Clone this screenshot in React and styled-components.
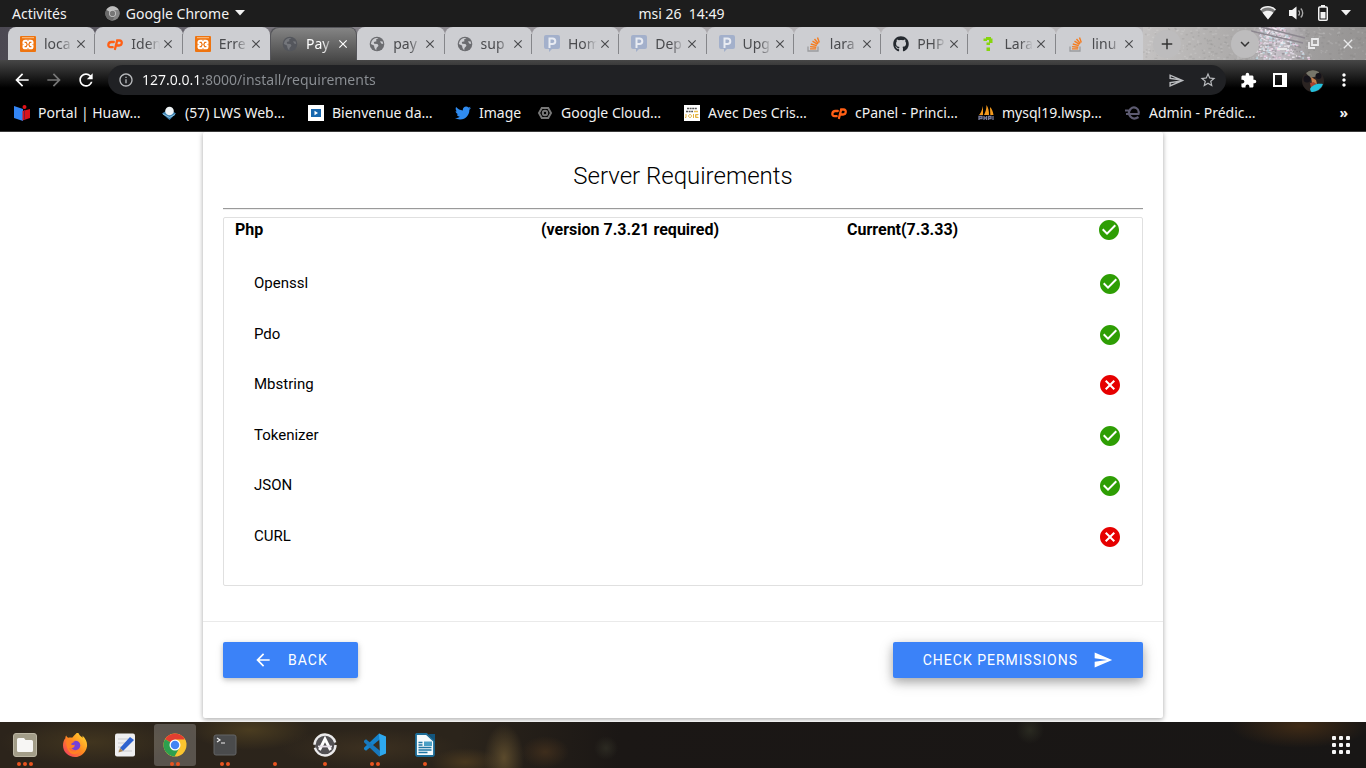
import React from "react";
import styled, { createGlobalStyle, css } from "styled-components";
import {
  MdCheckCircle, MdCancel, MdSend, MdOutlineSend, MdArrowBack, MdArrowForward, MdRefresh,
  MdInfoOutline, MdStarBorder, MdExtension, MdMoreVert, MdAdd, MdClose, MdKeyboardArrowDown,
} from "react-icons/md";
import { FaGithub, FaTwitter } from "react-icons/fa";

const GlobalStyle = createGlobalStyle`
  * { box-sizing: border-box; }
  body { margin: 0; background: #fff; font-family: "Noto Sans", "Open Sans", sans-serif; font-size: 14px; }
  button { font: inherit; color: inherit; border: 0; padding: 0; background: none; cursor: pointer; }
  a { color: inherit; text-decoration: none; }
  svg { display: block; flex: none; }
`;

const Desktop = styled.div`
  min-height: 100vh;
  display: flex;
  flex-direction: column;
`;

/* ---------- system bar ---------- */
const SystemBar = styled.header`
  display: grid;
  grid-template-columns: 1fr auto 1fr;
  align-items: center;
  height: 27px;
  padding: 0 15px 1px 12px;
  background: #1d1d1d;
  color: #f2f2f2;
`;
const BarGroup = styled.div`
  display: flex;
  align-items: center;
  gap: ${(p) => p.$gap}px;
  justify-content: ${(p) => (p.$end ? "flex-end" : "flex-start")};
`;
const AppMenu = styled.button`
  display: flex;
  align-items: center;
  gap: 6px;
`;
const Clock = styled.time`
  white-space: pre;
`;

/* ---------- browser ---------- */
const TabBar = styled.nav`
  display: flex;
  height: 33px;
  padding-left: 8px;
  background: linear-gradient(90deg, #4b4852 0, #8d8a90 30%, #b5b3b6 60%, #bdbbbd 100%);
`;
const Tab = styled.div`
  flex: 1 1 0;
  min-width: 0;
  display: flex;
  align-items: center;
  padding-left: 12px;
  position: relative;
  border-radius: 8px 8px 0 0;
  background: #cdced2;
  color: #4a4b4e;
  ${(p) => p.$divider && css`
    &::after {
      content: "";
      position: absolute;
      right: 0;
      top: 7px;
      height: 20px;
      width: 1px;
      background: #85868a;
    }
  `}
  ${(p) => p.$active && css`
    background: linear-gradient(#868686, #484848);
    color: #fff;
    box-shadow: inset 1px 1px 0 #55555a, inset -1px 0 0 #55555a;
  `}
`;
const TabTitle = styled.a`
  display: flex;
  align-items: center;
  gap: 8px;
  width: 60px;
  font-size: 14px;
  line-height: 24px;
  white-space: nowrap;
  mask-image: linear-gradient(90deg, #000 40px, transparent 53px);
`;
const CloseButton = styled.button`
  margin-left: -6px;
  width: 14px;
  height: 14px;
`;
const TabTail = styled.div`
  position: relative;
  overflow: hidden;
  flex: 0 0 223px;
  display: flex;
  align-items: center;
  padding: 0 10px;
  background: #aaa8a8;
`;
const Wallpaper = styled.svg`
  position: absolute;
  inset: 0;
  width: 100%;
  height: 100%;
`;
const RoundButton = styled.button`
  position: relative;
  display: grid;
  place-items: center;
  width: 28px;
  height: 28px;
  border-radius: 50%;
  background: #bdbcbd;
  color: #333;
`;
const WindowControls = styled.div`
  position: relative;
  display: flex;
  align-items: center;
  gap: 21px;
  color: #e9e9ea;
  margin-left: 18px;
`;
const Spacer = styled.div`
  flex: 1;
`;
const Toolbar = styled.div`
  display: flex;
  align-items: center;
  gap: 12px;
  height: 35px;
  padding: 5px 12px 0;
  background: linear-gradient(#474747, #000 28px);
  color: #fff;
`;
const IconButton = styled.button`
  display: grid;
  place-items: center;
  width: 20px;
  height: 20px;
  color: ${(p) => p.$color || "inherit"};
`;
const Omnibox = styled.label`
  flex: 1;
  display: flex;
  align-items: center;
  gap: 8px;
  height: 30px;
  padding: 0 8px 0 10px;
  border-radius: 15px;
  background: #202124;
  color: #b9bbbe;
`;
const OmniboxActions = styled.span`
  display: flex;
  gap: 12px;
`;
const Address = styled.input`
  flex: 1;
  border: 0;
  outline: 0;
  padding: 0;
  font: inherit;
  line-height: 24px;
  color: transparent;
  background: linear-gradient(90deg, #fff 60px, #8b8f94 60px);
  background-clip: text;
`;
const BookmarkBar = styled.nav`
  display: flex;
  align-items: center;
  gap: 16px;
  height: 37px;
  padding: 0 18px 1px 14px;
  background: #000;
  color: #f1f1f1;
  border-bottom: 1px solid #3a3a3a;
`;
const Bookmark = styled.a`
  display: flex;
  align-items: center;
  gap: 8px;
  white-space: nowrap;
`;
const BookmarkText = styled.span`
  width: ${(p) => (p.$short ? 42 : 107)}px;
`;
const MoreBookmarks = styled.button`
  font-weight: 700;
`;

/* ---------- web page ---------- */
const Page = styled.main`
  flex: 1;
  padding-bottom: 4px;
  overflow: hidden;
  background: #fff;
  color: #000;
  font-family: Roboto, "Liberation Sans", sans-serif;
`;
const Card = styled.section`
  max-width: 960px;
  margin: 0 auto;
  padding-top: 26px;
  border-radius: 2px;
  box-shadow: 0 2px 4px rgba(0, 0, 0, 0.2), 0 0 6px rgba(0, 0, 0, 0.16);
`;
const CardBody = styled.div`
  padding: 0 20px 35px;
`;
const Title = styled.h1`
  margin: 0 0 14px;
  font-size: 24px;
  font-weight: 300;
  line-height: 36px;
  text-align: center;
`;
const Rule = styled.hr`
  margin: 0 0 7px;
  border: 0;
  border-top: 1px solid #9a9a9a;
  border-bottom: 1px solid #eee;
`;
const TableFrame = styled.div`
  padding-bottom: 24px;
  border: 1px solid #e0e0e0;
  border-radius: 2px;
`;
const Table = styled.table`
  width: 100%;
  table-layout: fixed;
  border-collapse: collapse;
  text-align: left;
`;
const HeadCell = styled.th`
  padding: 0 11px 16px;
  font-size: 16px;
  line-height: 24px;
  font-weight: 700;
`;
const Cell = styled.td`
  padding: 14px 20px 14px 30px;
  font-size: 15px;
  line-height: 1.5;
`;
const Split = styled.div`
  display: flex;
  justify-content: space-between;
  padding-right: 10px;
`;
const Status = styled.span`
  display: flex;
  justify-content: flex-end;
  height: 22px;
  color: ${(p) => (p.$ok ? "#2e9e04" : "#e60000")};
`;
const CardFooter = styled.footer`
  display: flex;
  justify-content: space-between;
  padding: 20px 20px 40px;
  border-top: 1px solid #eaeaea;
`;
const ActionButton = styled.button`
  display: flex;
  align-items: center;
  gap: 15px;
  height: 36px;
  padding: 0 30px;
  border-radius: 2px;
  background: #3b82f8;
  color: #fff;
  font-size: 14px;
  letter-spacing: 1px;
  box-shadow: ${(p) => (p.$raised
    ? "0 4px 10px rgba(0,0,0,.24), 0 4px 16px rgba(0,0,0,.16)"
    : "0 2px 5px rgba(0,0,0,.18), 0 2px 8px rgba(0,0,0,.1)")};
`;

/* ---------- dock ---------- */
const Dock = styled.nav`
  display: flex;
  align-items: center;
  gap: 8px;
  height: 46px;
  padding: 0 16px 0 4px;
  background:
    radial-gradient(ellipse 20px 34px at 504px 36px, #5b4a2c, transparent),
    radial-gradient(ellipse 34px 14px at 465px 40px, #49381f, transparent),
    radial-gradient(ellipse 24px 16px at 545px 30px, #3e2d1c, transparent),
    radial-gradient(ellipse 12px 12px at 606px 26px, #2c2a22, transparent),
    radial-gradient(ellipse 14px 14px at 1030px 8px, #2a2a21, transparent),
    radial-gradient(ellipse 70px 22px at 1300px 4px, #402b16, transparent),
    radial-gradient(ellipse 60px 20px at 250px 8px, #4a3c20, transparent),
    radial-gradient(ellipse 90px 20px at 370px 26px, #3c3020, transparent),
    radial-gradient(ellipse 90px 24px at 90px 20px, #41351f, transparent),
    linear-gradient(90deg, #2c241b 0, #2b241b 460px, #1b1715 620px, #181615 100%);
`;
const DockItem = styled.button`
  display: flex;
  flex-direction: column;
  align-items: center;
  width: 42px;
  height: 42px;
  padding-top: 9px;
  gap: 5px;
  border-radius: 3px;
  background: ${(p) => (p.$active ? "rgba(255,255,255,.22)" : "none")};
`;
const Dots = styled.span`
  display: flex;
  gap: 2px;
  height: 4px;
`;
const Dot = styled.i`
  width: 4px;
  height: 4px;
  border-radius: 50%;
  background: #e95420;
`;
const AppGrid = styled.button`
  display: grid;
  grid-template-columns: repeat(3, 4px);
  gap: 3px;
`;
const GridDot = styled.i`
  height: 4px;
  border-radius: 1px;
  background: #f5f5f5;
`;

/* ---------- icons ---------- */
const XamppIcon = () => (
  <svg width="16" height="16" viewBox="0 0 16 16">
    <rect width="16" height="16" rx="1" fill="#ee7410" />
    <path d="M2 1.700h12" stroke="#fbc38b" strokeWidth="1" />
    <rect x="2.500" y="3.700" width="11" height="9.600" rx="2.600" fill="#fff" />
    <path d="M7.200 3.700h1.600L8 5.200ZM7.200 13.300h1.600L8 11.800ZM2.500 7.600v1.800l1.200-.9ZM13.500 7.600v1.800l-1.200-.9Z" fill="#ee7410" />
    <path d="M4.600 6.300h1.600l1 2.200-1 2.200H4.600M11.400 6.300H9.800l-1 2.200 1 2.200h1.600" stroke="#ee7410" strokeWidth="1.200" fill="none" />
  </svg>
);
const GlobeIcon = ({ dark }) => (
  <svg width="16" height="16" viewBox="0 0 16 16">
    <circle cx="8" cy="8" r="7.300" fill={dark ? "#54565c" : "#6b6c70"} />
    <path d="M9.500 2.200 7 3.600l.5 1.600-2.700.9.400 1.700 3.300.3 1 1.700-2 2.300-.3 2.300L5.500 12 5 9.500 1.800 8A6.200 6.200 0 0 1 9.500 2.200ZM11 5.200l2.600.3.600 2.400-2-.3Z" fill={dark ? "#74767b" : "#cdced2"} />
  </svg>
);
const CpIcon = () => (
  <svg width="16" height="16" viewBox="0 0 16 16" fill="none" stroke="#ff5f15" strokeWidth="2.300" strokeLinecap="round">
    <path d="M6.800 6H4.300c-3.600 0-4 5.200-.8 5.200h2.200" />
    <path d="M8 13l2.200-8.500h2.300c3.300 0 2.800 5-.4 5h-1.500" />
  </svg>
);
const PIcon = () => (
  <svg width="16" height="17" viewBox="0 0 16 17">
    <path d="M2 0h12a2 2 0 0 1 2 2v10a2 2 0 0 1-2 2H8l-3 3v-3H2a2 2 0 0 1-2-2V2a2 2 0 0 1 2-2Z" fill="#a3b0cb" />
    <path d="M5.500 13V3.500h3a2.700 2.700 0 0 1 0 5.600h-3" fill="none" stroke="#e8ebf2" strokeWidth="2" />
  </svg>
);
const StackIcon = () => (
  <svg width="16" height="16" viewBox="0 0 16 16" fill="none">
    <path d="M2 10.500V15h10v-4.500" stroke="#9b9c9f" strokeWidth="1.300" />
    <path d="M4 12.900h6.200M4.100 10.600l6.200.6M4.800 8l6 1.700M6.500 5.200l5 3.200M8.500 3l3.800 4.500M11.500 1.500l1.800 5" stroke="#f57c1f" strokeWidth="1.400" />
  </svg>
);
const QuestionIcon = () => (
  <svg width="16" height="16" viewBox="0 0 16 16">
    <path d="M3.500 5V2.500H6V1h5v1.500h1.500V7H10v2H6.500V6.500H9V4H7v1ZM6.500 11.500H10V15H6.500Z" fill="#86d50d" />
  </svg>
);
const HuaweiIcon = () => (
  <svg width="16" height="16" viewBox="0 0 16 16">
    <path d="M0 1l9 3v12l-9-3Z" fill="#3385f5" />
    <circle cx="10.500" cy="2" r="2" fill="#e2121b" />
    <path d="M8.500 6 16 4v9l-7.500 2.500Z" fill="#d8131c" />
    <path d="M10.500 5v10" stroke="#7c1a3c" />
  </svg>
);
const MailIcon = () => (
  <svg width="16" height="16" viewBox="0 0 16 16">
    <path d="M1 8.500 8 4l7 4.500L8.500 15Z" fill="#3b7fae" />
    <circle cx="8.500" cy="6" r="4.300" fill="#eef3f6" />
    <path d="m2 9 6.500 3.500L14 9.500" stroke="#8cc3e2" fill="none" />
  </svg>
);
const PlayIcon = () => (
  <svg width="16" height="16" viewBox="0 0 16 16">
    <path d="M0 0h16v16H0Z" fill="#fff" />
    <path d="M3 4h10v8H3Z" fill="#1767ae" />
    <path d="M6.500 5.800v4.400L10 8Z" fill="#fff" />
  </svg>
);
const CloudIcon = () => (
  <svg width="16" height="16" viewBox="0 0 16 16" fill="none" stroke="#777" strokeWidth="2">
    <path d="M4.800 3h6.400L14 8l-2.800 5H4.800L2 8Z" />
    <circle cx="8" cy="8" r="2.200" />
  </svg>
);
const JoieIcon = () => (
  <svg width="16" height="16" viewBox="0 0 16 16" fill="none">
    <path d="M0 0h16v16H0Z" fill="#fff" />
    <path d="M3 3.500h10M2 6.500h7" stroke="#555" strokeWidth="1.500" strokeDasharray="2 .6" />
    <path d="M10 6.500h4" stroke="#e9bd4e" strokeWidth="1.500" />
    <path d="M2 9v3.500H1M6 9.500a1.500 1.500 0 1 0 .1 0M9.500 9v4M14.500 9.500h-3v3h3M11.500 11h2" stroke="#e4b23c" />
  </svg>
);
const MyAdminIcon = () => (
  <svg width="16" height="16" viewBox="0 0 16 16">
    <path d="M5 1v9H1C3 8 4 5 5 1ZM8.500 0c2 3 2.500 6 2.500 10H6C7.500 7 8.500 4 8.500 0ZM12 2c2 2 3 4.500 3.500 8H12.300Z" fill="#f39a1d" />
    <path d="M1 15v-3.500h3v2H1M6 15v-4M6 13h2.500M8.500 15v-4M10.500 15v-3.500h2.500v2h-2.500M15 15v-4" stroke="#767b9b" fill="none" strokeWidth="1.300" />
  </svg>
);
const AdminIcon = () => (
  <svg width="16" height="16" viewBox="0 0 16 16" fill="none" stroke="#5c5a70" strokeWidth="2.200">
    <path d="M0 5.500h4M1 9h12.500C15 3.500 9 .5 5.500 4 1.500 9 6.500 16.500 13.500 12" />
  </svg>
);
const ChromeIcon = ({ size, mono }) => (
  <svg width={size} height={size} viewBox="0 0 48 48">
    <circle cx="24" cy="24" r="23" fill={mono ? "#858585" : "#fbc52f"} />
    <path d="M24 24 4.100 12.500a23 23 0 0 1 39.800 0Z" fill={mono ? "#bdbdbd" : "#e23e30"} />
    <path d="M4.100 12.500A23 23 0 0 0 23 47l10-17.500-9-5.500Z" fill={mono ? "#6a6a6a" : "#2d9f4e"} />
    <path d="M24 13h19.900a23 23 0 0 1 2 16Z" fill={mono ? "#858585" : "#fbc52f"} />
    <circle cx="24" cy="24" r="11" fill={mono ? "#ccc" : "#fff"} />
    <circle cx="24" cy="24" r="8.500" fill={mono ? "#777" : "#4285f4"} />
  </svg>
);
const WifiIcon = () => (
  <svg width="16" height="14" viewBox="0 0 16 14" fill="#f2f2f2">
    <path d="M8 13.500.5 4C4-.2 12-.2 15.500 4Z" opacity=".45" />
    <path d="M8 13.500 2.600 6.700c2.700-2.500 8.100-2.500 10.800 0Z" />
    <path d="M.5 4C4-.2 12-.2 15.500 4" fill="none" stroke="#f2f2f2" strokeWidth="1.500" />
  </svg>
);
const VolumeIcon = () => (
  <svg width="16" height="14" viewBox="0 0 16 14">
    <path d="M0 4h3l4.500-3.500v13L3 10H0Z" fill="#f2f2f2" />
    <path d="M9.500 4.500c1.300 1.300 1.300 3.700 0 5M11.800 2.500c2.500 2.500 2.500 6.500 0 9" fill="none" stroke="#aaa" strokeWidth="1.400" />
  </svg>
);
const BatteryIcon = () => (
  <svg width="10" height="16" viewBox="0 0 10 16">
    <path d="M3 0h4v2H3Z" fill="#f2f2f2" />
    <rect x=".75" y="2" width="8.500" height="13.200" rx="1" fill="none" stroke="#f2f2f2" strokeWidth="1.500" />
    <path d="M2.500 7h5v6.500h-5Z" fill="#f2f2f2" />
  </svg>
);
const CaretIcon = () => (
  <svg width="10" height="6" viewBox="0 0 10 6"><path d="M0 0h10L5 5.500Z" fill="#f2f2f2" /></svg>
);
const MinimizeIcon = () => (
  <svg width="10" height="12" viewBox="0 0 10 12"><path d="M0 10h10v2H0Z" fill="currentColor" /></svg>
);
const RestoreIcon = () => (
  <svg width="11" height="11" viewBox="0 0 11 11" fill="none" stroke="currentColor" strokeWidth="1.800">
    <path d="M4 1h6v6H4Z" /><path d="M1 4v6h6" />
  </svg>
);
const PanelIcon = () => (
  <svg width="14" height="14" viewBox="0 0 14 14"><path d="M0 0h14v14H0ZM2 2v10h7V2Z" fill="#fff" fillRule="evenodd" /></svg>
);
const Avatar = () => (
  <svg width="22" height="22" viewBox="0 0 22 22">
    <circle cx="11" cy="11" r="11" fill="#2b2422" />
    <path d="M4 3a11 11 0 0 1 13-1l-1 4-8 2Z" fill="#77766a" />
    <circle cx="5" cy="9" r="3.500" fill="#15131a" />
    <circle cx="16.500" cy="6" r="3" fill="#15131a" />
    <path d="m9 7 5 3 1 4-5-1Z" fill="#c47c4b" />
    <path d="m8 13 4-1 2 3-5 3Z" fill="#a8402f" />
    <path d="M8 19c2-4 7-6 13-5a11 11 0 0 1-12 7.800Z" fill="#24c0dc" />
  </svg>
);
const FilesIcon = () => (
  <svg width="24" height="24" viewBox="0 0 24 24">
    <rect x=".5" y=".5" width="23" height="23" rx="2.500" fill="#a39d88" stroke="#bcb6a3" />
    <path d="M4 6.500A1.500 1.500 0 0 1 5.500 5H11l1.500 2h6A1.500 1.500 0 0 1 20 8.500v9a1.500 1.500 0 0 1-1.500 1.500h-13A1.500 1.500 0 0 1 4 17.500Z" fill="#f7f6f4" />
  </svg>
);
const FirefoxIcon = () => (
  <svg width="26" height="24" viewBox="0 1 26 25">
    <defs>
      <linearGradient id="fox" x1="1" y1="0" x2="0" y2="1">
        <stop offset="0" stopColor="#ffe436" /><stop offset=".5" stopColor="#ff8a1f" /><stop offset="1" stopColor="#f0306a" />
      </linearGradient>
    </defs>
    <path d="M16 0c1 2 2 4 5 6 0-1 0-1.500-.3-2.500C24.500 7 26 11 25.500 15 24 22 19 26 13 26 6 26 .5 20.500.5 14c0-3 1-6 2.500-7.500 0-1 0-2 .8-3 .5 1.200 1.200 2 2.200 2.500 1.500-.5 3-.5 4 0C12 3.500 14 1.500 16 0Z" fill="url(#fox)" />
    <circle cx="13.500" cy="14" r="5" fill="#7540d8" />
    <path d="M4 8c4 0 6 1 9 2-2 .5-3 1.500-4.500 2.500 1 1 2.500 1.500 4 .5 1 3-3 5-6 3.500C9 22 16 21 18.500 17c0 5-4 6.500-7.500 6S3 17 4 8Z" fill="#ff8124" />
  </svg>
);
const EditorIcon = () => (
  <svg width="24" height="24" viewBox="0 0 24 24">
    <rect x="2" y=".5" width="20" height="23" rx="2" fill="#efeff0" />
    <path d="M5 6h12M5 10h8M5 14h5M5 18h14" stroke="#cbcbce" />
    <path d="m17 4 4 3L10 18l-3-3Z" fill="#2f63cf" />
    <path d="m7 15 3 3-4.500 1.500Z" fill="#a8834e" />
  </svg>
);
const TerminalIcon = () => (
  <svg width="24" height="24" viewBox="0 0 24 24">
    <rect x="1" y="2" width="22" height="20" rx="2" fill="#4a4b4c" stroke="#636465" />
    <path d="m4 5 3 2-3 2M8 10h4" fill="none" stroke="#eee" strokeWidth="1.200" />
  </svg>
);
const SoftwareIcon = () => (
  <svg width="24" height="24" viewBox="0 0 24 24" fill="none">
    <circle cx="12" cy="12" r="10.500" fill="#535154" stroke="#ecebec" strokeWidth="2.400" strokeDasharray="30 3" />
    <path d="m6.500 17 5.500-11 5.500 11" stroke="#fff" strokeWidth="2.800" />
    <path d="M5 13.500h14" stroke="#e6dfe8" strokeWidth="1.800" />
  </svg>
);
const CodeIcon = () => (
  <svg width="24" height="24" viewBox="0 0 24 24">
    <path d="M17 1.500v4.800L3 17.800 1 16.200v-1.400L16 .6Z" fill="#1583cc" />
    <path d="M17 22.500v-4.800L3 6.200 1 7.800v1.400L16 23.400Z" fill="#1878bd" />
    <path d="m16 .6 7 3v16.800l-7 3L17 22Z" fill="#2ea8ee" />
  </svg>
);
const WriterIcon = () => (
  <svg width="24" height="24" viewBox="0 0 24 24">
    <path d="M3.500 1h10L21 8v13.500a1.500 1.500 0 0 1-1.500 1.500h-15A1.500 1.500 0 0 1 3 21.500V1.500Z" fill="#f4fafc" stroke="#1c6c97" strokeWidth="1.800" />
    <path d="M15.500 1H22v7Z" fill="#12567f" />
    <path d="M5.500 9.500h4M5.500 12h4M5.500 14.500h13M5.500 17h13M5.500 19.500h9" stroke="#1f76a3" strokeWidth="1.400" />
    <path d="M11 8.500h8v4.500h-8Z" fill="#4a9fc5" />
  </svg>
);
const Empty = () => <svg width="24" height="24" />;

/* Light shining through branches: seeded specks, densest near the window controls */
const SPECK_COLORS = ["#f7f4fb", "#e9e2ee", "#8f8a92", "#efc9e2", "#c3dfea", "#a5a0a6"];
const random = (n) => {
  const v = Math.sin(n * 91.7 + 13.1) * 43758.5453;
  return v - Math.floor(v);
};
const brightSpecks = Array.from({ length: 330 }, (_, i) => {
  const y = random(i * 3 + 1) * 33;
  const spread = 12 + y / 2;
  return {
    x: 128 + y / 3 + (random(i * 3) - 0.5) * 2 * spread,
    y,
    w: 1 + random(i * 3 + 2) * 2,
    fill: SPECK_COLORS[Math.floor(random(i * 7) * SPECK_COLORS.length)],
  };
});
const dimSpecks = Array.from({ length: 420 }, (_, i) => ({
  x: random(i * 5 + 900) * 223,
  y: random(i * 5 + 901) * 33,
  w: 1 + random(i * 5 + 902) * 2,
  fill: random(i * 5 + 903) > 0.5 ? "#fff" : "#666",
}));

const Branches = () => (
  <Wallpaper viewBox="0 0 223 33" preserveAspectRatio="none">
    <defs>
      <linearGradient id="bark">
        <stop offset="0" stopColor="#c4c2c2" /><stop offset=".3" stopColor="#b3b1b0" />
        <stop offset=".48" stopColor="#a9a7a7" /><stop offset=".6" stopColor="#c6c1c9" />
        <stop offset=".74" stopColor="#a09e9e" /><stop offset="1" stopColor="#959392" />
      </linearGradient>
    </defs>
    <path d="M0 0h223v33H0Z" fill="url(#bark)" />
    {dimSpecks.map((s, i) => <rect key={i} x={s.x} y={s.y} width={s.w} height="1.500" fill={s.fill} opacity=".13" />)}
    {brightSpecks.map((s, i) => <rect key={i} x={s.x} y={s.y} width={s.w} height="1.500" fill={s.fill} opacity=".75" />)}
    <path d="M108 4 160 16M118 0l44 11" stroke="#8c878f" strokeWidth="1.500" fill="none" />
  </Wallpaper>
);

const tabs = [
  ["loca", XamppIcon], ["Iden", CpIcon], ["Erre", XamppIcon],
  ["Pay", () => <GlobeIcon dark />], ["pay", GlobeIcon], ["sup", GlobeIcon],
  ["Hom", PIcon], ["Dep", PIcon], ["Upg", PIcon], ["lara", StackIcon],
  ["PHP", () => <FaGithub size={16} color="#24292f" />], ["Lara", QuestionIcon], ["linu", StackIcon],
];
const ACTIVE_TAB = 3;

const bookmarks = [
  ["Portal | Huaw…", HuaweiIcon], ["(57) LWS Web…", MailIcon], ["Bienvenue da…", PlayIcon],
  ["Image", () => <FaTwitter size={16} color="#2f8bf0" />], ["Google Cloud…", CloudIcon],
  ["Avec Des Cris…", JoieIcon], ["cPanel - Princi…", CpIcon], ["mysql19.lwsp…", MyAdminIcon],
  ["Admin - Prédic…", AdminIcon],
];

const extensions = [
  ["Openssl", true], ["Pdo", true], ["Mbstring", false],
  ["Tokenizer", true], ["JSON", true], ["CURL", false],
];

const dockApps = [
  ["Files", FilesIcon, 3], ["Firefox", FirefoxIcon, 0], ["Text Editor", EditorIcon, 0],
  ["Google Chrome", () => <ChromeIcon size={24} />, 2], ["Terminal", TerminalIcon, 2],
  ["Application", Empty, 1], ["Software Updater", SoftwareIcon, 1],
  ["Visual Studio Code", CodeIcon, 2], ["LibreOffice Writer", WriterIcon, 1],
];

const StatusIcon = ({ ok }) => (
  <Status $ok={ok} role="img" aria-label={ok ? "Enabled" : "Missing"}>
    {ok ? <MdCheckCircle size={24} /> : <MdCancel size={24} />}
  </Status>
);

export default function App() {
  return (
    <Desktop>
      <GlobalStyle />
      <SystemBar>
        <BarGroup $gap={38}>
          <button>Activités</button>
          <AppMenu><ChromeIcon size={15} mono />Google Chrome<CaretIcon /></AppMenu>
        </BarGroup>
        <Clock>{"msi 26  14:49"}</Clock>
        <BarGroup $gap={13} $end><WifiIcon /><VolumeIcon /><BatteryIcon /><CaretIcon /></BarGroup>
      </SystemBar>

      <TabBar aria-label="Tabs">
        {tabs.map(([title, Icon], i) => (
          <Tab key={i} $active={i === ACTIVE_TAB} $divider={i !== 2 && i !== 3 && i !== 12}>
            <TabTitle href="#"><Icon />{title}</TabTitle>
            <CloseButton aria-label="Close tab"><MdClose size={14} /></CloseButton>
          </Tab>
        ))}
        <TabTail>
          <Branches />
          <RoundButton aria-label="New tab"><MdAdd size={18} /></RoundButton>
          <Spacer />
          <RoundButton aria-label="Search tabs"><MdKeyboardArrowDown size={18} /></RoundButton>
          <WindowControls>
            <button aria-label="Minimize"><MinimizeIcon /></button>
            <button aria-label="Restore"><RestoreIcon /></button>
            <button aria-label="Close"><MdClose size={16} /></button>
          </WindowControls>
        </TabTail>
      </TabBar>

      <Toolbar>
        <IconButton aria-label="Back"><MdArrowBack size={20} /></IconButton>
        <IconButton aria-label="Forward" $color="#777"><MdArrowForward size={20} /></IconButton>
        <IconButton aria-label="Reload"><MdRefresh size={20} /></IconButton>
        <Omnibox>
          <MdInfoOutline size={16} />
          <Address aria-label="Address" defaultValue="127.0.0.1:8000/install/requirements" />
          <OmniboxActions>
            <IconButton aria-label="Share"><MdOutlineSend size={17} /></IconButton>
            <IconButton aria-label="Bookmark"><MdStarBorder size={18} /></IconButton>
          </OmniboxActions>
        </Omnibox>
        <IconButton aria-label="Extensions"><MdExtension size={17} /></IconButton>
        <IconButton aria-label="Side panel"><PanelIcon /></IconButton>
        <IconButton aria-label="Profile"><Avatar /></IconButton>
        <IconButton aria-label="Menu"><MdMoreVert size={20} /></IconButton>
      </Toolbar>

      <BookmarkBar aria-label="Bookmarks">
        {bookmarks.map(([label, Icon]) => (
          <Bookmark key={label} href="#">
            <Icon /><BookmarkText $short={label === "Image"}>{label}</BookmarkText>
          </Bookmark>
        ))}
        <Spacer />
        <MoreBookmarks aria-label="More bookmarks">»</MoreBookmarks>
      </BookmarkBar>

      <Page>
        <Card>
          <CardBody>
            <Title>Server Requirements</Title>
            <Rule />
            <TableFrame>
              <Table>
                <thead>
                  <tr>
                    <HeadCell>Php</HeadCell>
                    <HeadCell>(version 7.3.21 required)</HeadCell>
                    <HeadCell><Split>Current(7.3.33)<StatusIcon ok /></Split></HeadCell>
                  </tr>
                </thead>
                <tbody>
                  {extensions.map(([name, ok]) => (
                    <tr key={name}>
                      <Cell colSpan={2}>{name}</Cell>
                      <Cell><StatusIcon ok={ok} /></Cell>
                    </tr>
                  ))}
                </tbody>
              </Table>
            </TableFrame>
          </CardBody>
          <CardFooter>
            <ActionButton><MdArrowBack size={20} />BACK</ActionButton>
            <ActionButton $raised>CHECK PERMISSIONS<MdSend size={20} /></ActionButton>
          </CardFooter>
        </Card>
      </Page>

      <Dock aria-label="Applications">
        {dockApps.map(([name, Icon, windows]) => (
          <DockItem key={name} aria-label={name} $active={name === "Google Chrome"}>
            <Icon />
            <Dots>{Array.from({ length: windows }, (_, i) => <Dot key={i} />)}</Dots>
          </DockItem>
        ))}
        <Spacer />
        <AppGrid aria-label="Show applications">
          {Array.from({ length: 9 }, (_, i) => <GridDot key={i} />)}
        </AppGrid>
      </Dock>
    </Desktop>
  );
}
